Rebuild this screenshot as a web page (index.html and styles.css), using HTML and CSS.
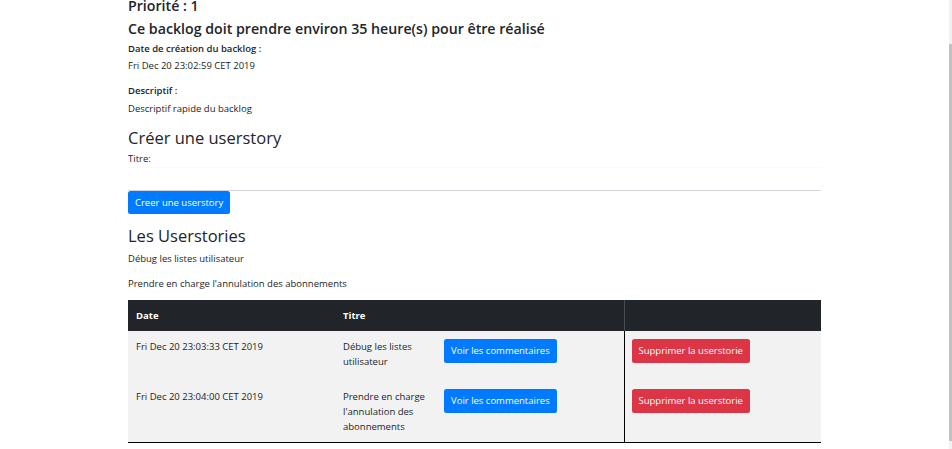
FILE: index.html
```html
<!DOCTYPE html>
<html lang="fr">
<head>
<meta charset="utf-8">
<title>Backlog</title>
<link rel="stylesheet" href="styles.css">
</head>
<body>
<div class="scrollbar"><div class="thumb"></div></div>
<main class="page">
  <h4 class="h4 prio">Priorité : 1</h4>
  <h4 class="h4 estimate">Ce backlog doit prendre environ 35 heure(s) pour être réalisé</h4>
  <div class="label first">Date de création du backlog :</div>
  <p class="value">Fri Dec 20 23:02:59 CET 2019</p>
  <div class="label">Descriptif :</div>
  <p class="value last">Descriptif rapide du backlog</p>

  <h3 class="h3 create">Créer une userstory</h3>
  <form class="form">
    <label class="titre" for="titre">Titre:</label>
    <input class="input" id="titre" type="text">
    <button class="btn btn-primary btn-create" type="button">Creer une userstory</button>
  </form>

  <h3 class="h3 list">Les Userstories</h3>
  <p class="story">Débug les listes utilisateur</p>
  <p class="story second">Prendre en charge l'annulation des abonnements</p>

  <table class="table">
    <colgroup>
      <col class="c-date"><col class="c-title"><col class="c-see"><col class="c-del">
    </colgroup>
    <thead>
      <tr><th>Date</th><th>Titre</th><th></th><th class="sep-head"></th></tr>
    </thead>
    <tbody>
      <tr class="r1">
        <td>Fri Dec 20 23:03:33 CET 2019</td>
        <td>Débug les listes utilisateur</td>
        <td><button class="btn btn-primary" type="button">Voir les commentaires</button></td>
        <td class="sep"><button class="btn btn-danger" type="button">Supprimer la userstorie</button></td>
      </tr>
      <tr class="r2">
        <td>Fri Dec 20 23:04:00 CET 2019</td>
        <td>Prendre en charge l'annulation des abonnements</td>
        <td><button class="btn btn-primary" type="button">Voir les commentaires</button></td>
        <td class="sep"><button class="btn btn-danger" type="button">Supprimer la userstorie</button></td>
      </tr>
    </tbody>
  </table>
</main>
</body>
</html>
```
FILE: styles.css
```css
html, body {
  margin: 0;
  padding: 0;
  background: #ffffff;
  overflow: hidden;
}
body {
  font-family: "Open Sans", "Noto Sans", sans-serif;
  font-size: 9.5px;
  line-height: 15px;
  color: #212529;
}
.scrollbar {
  position: fixed;
  top: 0;
  right: 0;
  width: 3px;
  height: 449px;
  background: #f1f1f1;
}
.thumb {
  margin-top: 44px;
  height: 397px;
  background: #c1c1c1;
}
.page {
  width: 693px;
  margin-left: 128px;
}
.h4 {
  margin: 0;
  font-size: 14.2px;
  line-height: 19px;
  font-weight: 600;
}
.prio { margin-top: -4.5px; margin-bottom: 4px; }
.label { font-weight: 600; margin-bottom: 2.5px; }
.label.first { margin-top: 3px; }
.value { margin: 0 0 10px; }
.value.last { margin-bottom: 0; }
.h3 {
  margin: 0;
  font-size: 16.5px;
  line-height: 21px;
  font-weight: 400;
}
.create { margin-top: 11px; }
.form { margin: 0; display: flex; flex-direction: column; align-items: flex-start; }
.titre { display: block; margin-top: 3px; }
.input {
  display: block;
  box-sizing: border-box;
  width: 693px;
  height: 24px;
  margin: 1px 0 0;
  border: 0;
  border-top: 1px solid #fafafa;
  border-bottom: 1px solid #ced4da;
  background: #fff;
  padding: 0 8px;
  font: inherit;
  outline: none;
}
.btn {
  display: inline-block;
  box-sizing: border-box;
  height: 23.5px;
  padding: 0 7px;
  border: 0;
  border-radius: 2.5px;
  font-family: inherit;
  font-size: 9.5px;
  line-height: 23.5px;
  color: #ffffff;
  cursor: pointer;
  white-space: nowrap;
}
.btn-primary { background: #007bff; }
.btn-danger { background: #dc3545; }
.btn-create { margin-top: 0; height: 23px; line-height: 23px; }
.list { margin-top: 11px; }
.story { margin: 5px 0 0; }
.story.second { margin-top: 10px; }
.table {
  margin-top: 9.5px;
  width: 693px;
  table-layout: fixed;
  border-collapse: collapse;
  border-spacing: 0;
}
.c-date { width: 207px; }
.c-title { width: 101px; }
.c-see { width: 188px; }
.c-del { width: 197px; }
.table th {
  background: #212529;
  color: #ffffff;
  font-weight: 700;
  text-align: left;
  padding: 8px;
  height: 15px;
  vertical-align: top;
}
.table th.sep-head { border-left: 1px solid #454d55; }
.table td {
  background: #f2f2f2;
  padding: 8px;
  vertical-align: top;
}
.table td.sep { border-left: 1px solid #000000; padding-left: 7px; }
.r1 td { height: 34px; }
.r2 td { height: 44px; }
.r2 td { border-bottom: 1px solid #000000; }
```
